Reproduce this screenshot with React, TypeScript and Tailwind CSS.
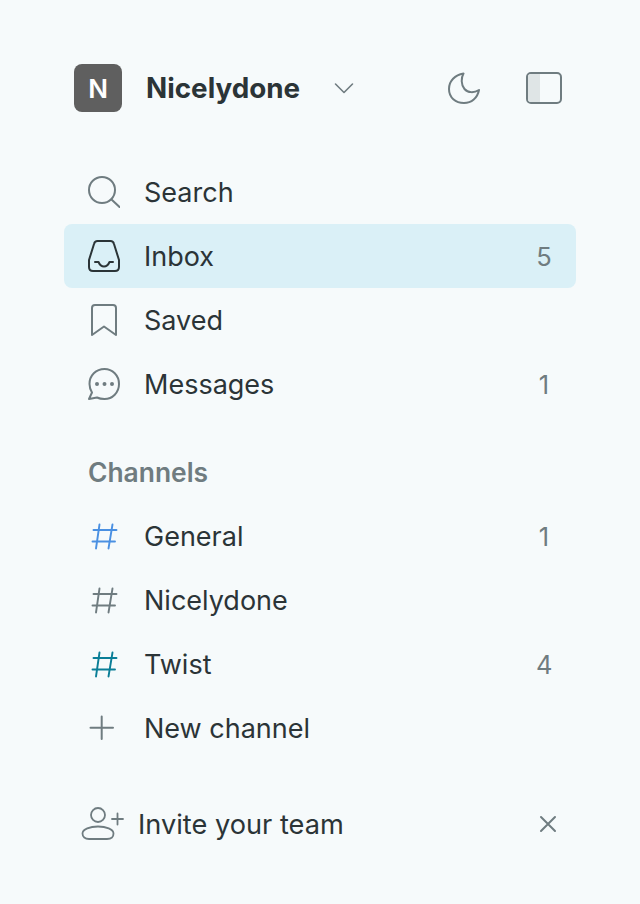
import React from "react";

const Hash = ({ c }: { c: string }) => (
  <svg width="32" height="32" viewBox="0 0 32 32" fill="none" stroke={c} strokeWidth="1.9" strokeLinecap="round" className="shrink-0">
    <path d="M5.500 10H28.500M4.500 21.500H27M11.500 4.500L8 28.500M24.500 4.500L20.500 28.500" />
  </svg>
);

const Row = ({ icon, label, count, active }: { icon: React.ReactNode; label: string; count?: string; active?: boolean }) => (
  <div className={`flex h-16 items-center rounded-lg pl-6 pr-6 ${active ? "bg-[#daf0f7]" : ""}`}>
    <div className="flex w-[32px] shrink-0 items-center justify-center">{icon}</div>
    <span className="ml-6 flex-1 pt-[1px] text-[27px] leading-none text-[#2b3437]">{label}</span>
    {count && <span className="w-4 pt-[2px] text-center text-[25.500px] leading-none text-[#6f7c80]">{count}</span>}
  </div>
);

export default function App() {
  return (
    <div className="h-[904px] w-[640px] bg-[#f6fafb] px-16 pt-16 font-['Inter','sans-serif']">
      <div className="flex h-12 items-center pl-[10px] pr-[14px]">
        <div className="flex h-12 w-12 items-center justify-center rounded-lg bg-[#5f5f5f] text-[26px] font-semibold text-white">N</div>
        <span className="ml-6 pt-[1px] text-[27.800px] font-bold text-[#2b3437]">Nicelydone</span>
        <svg width="24" height="24" viewBox="0 0 24 24" fill="none" stroke="#6f7c80" strokeWidth="1.600" strokeLinecap="round" strokeLinejoin="round" className="ml-[32px]"><path d="M3.500 8L12 16.500L20.500 8" /></svg>
        <svg width="32" height="32" viewBox="0 0 32 32" fill="none" stroke="#6f7c80" strokeWidth="2" strokeLinejoin="round" className="ml-auto"><path d="M15.500 1.500C7 3 1 9 1 17C1 25.500 7.500 31 16 31C23.500 31 29.500 26 31 18C26 21 20 21 16.500 17C13 13 13 6 15.500 1.500Z" /></svg>
        <div className="relative ml-[46px] h-8 w-9 overflow-hidden rounded-[5px] border-2 border-[#6f7c80]">
          <div className="h-full w-[12px] bg-[#dfe5e6]" />
        </div>
      </div>
      <div className="mt-[48px] flex flex-col">
        <Row label="Search" icon={<svg width="32" height="32" viewBox="0 0 32 32" fill="none" stroke="#6f7c80" strokeWidth="2" strokeLinecap="round"><circle cx="14" cy="14" r="13"/><path d="M23.500 23.500L31.500 31"/></svg>} />
        <Row active label="Inbox" count="5" icon={<svg width="32" height="32" viewBox="0 0 32 32" fill="none" stroke="#2b3437" strokeWidth="2" strokeLinecap="round" strokeLinejoin="round"><path d="M9.500 1H22.500C24.500 1 25.500 2 26 4L31 20V27C31 29.500 29.500 31 27 31H5C2.500 31 1 29.500 1 27V20L6 4C6.500 2 7.500 1 9.500 1Z"/><path d="M7 22H10.500C12 25.500 13.500 26.500 16 26.500C18.500 26.500 20 25.500 21.500 22H25"/></svg>} />
        <Row label="Saved" icon={<svg width="32" height="32" viewBox="0 0 32 32" fill="none" stroke="#6f7c80" strokeWidth="2" strokeLinejoin="round"><path d="M4 4C4 2 5 1 7 1H25C27 1 28 2 28 4V31L16 22.500L4 31Z"/></svg>} />
        <Row label="Messages" count="1" icon={<svg width="32" height="32" viewBox="0 0 32 32" fill="none" stroke="#6f7c80" strokeWidth="2" strokeLinejoin="round"><path d="M16.500 1C8 1 1.500 7.500 1.500 16C1.500 19 2.500 22 4 24.500L1 31L9 29.500C11 30.500 13.500 31 16.500 31C24.500 31 31 24.500 31 16C31 7.500 24.500 1 16.500 1Z"/><circle cx="9" cy="16" r="1" fill="#6f7c80"/><circle cx="16.500" cy="16" r="1" fill="#6f7c80"/><circle cx="24" cy="16" r="1" fill="#6f7c80"/></svg>} />
      </div>
      <div className="mt-6 flex h-16 items-center pl-6 pt-[2px] text-[26.400px] font-semibold text-[#6f7c80]">Channels</div>
      <div className="flex flex-col">
        <Row label="General" count="1" icon={<Hash c="#4a90e2" />} />
        <Row label="Nicelydone" icon={<Hash c="#6f7c80" />} />
        <Row label="Twist" count="4" icon={<Hash c="#0a7e97" />} />
        <Row label="New channel" icon={<svg width="32" height="32" viewBox="0 0 32 32" fill="none" stroke="#6f7c80" strokeWidth="2" strokeLinecap="round"><path d="M13.700 4.500V27M2.500 15.700H25"/></svg>} />
      </div>
      <div className="mt-8 flex h-16 items-center pl-4 pr-[18px]">
        <svg width="44" height="38" viewBox="0 0 44 38" fill="none" stroke="#6f7c80" strokeWidth="1.800" strokeLinecap="round" className="shrink-0"><circle cx="18" cy="10" r="7"/><path d="M2.500 28.500C2.500 24 10 21.500 18 21.500C26 21.500 33.500 24 33.500 28.500C33.500 32 31 34 27 34H9C5 34 2.500 32 2.500 28.500Z"/><path d="M37.500 8.500V19.500M32 14H43"/></svg>
        <span className="ml-[14px] flex-1 pt-[2px] text-[27.200px] leading-none text-[#2b3437]">Invite your team</span>
        <svg width="20" height="20" viewBox="0 0 20 20" fill="none" stroke="#6f7c80" strokeWidth="2" strokeLinecap="round"><path d="M3 3L17 17M17 3L3 17"/></svg>
      </div>
    </div>
  );
}
